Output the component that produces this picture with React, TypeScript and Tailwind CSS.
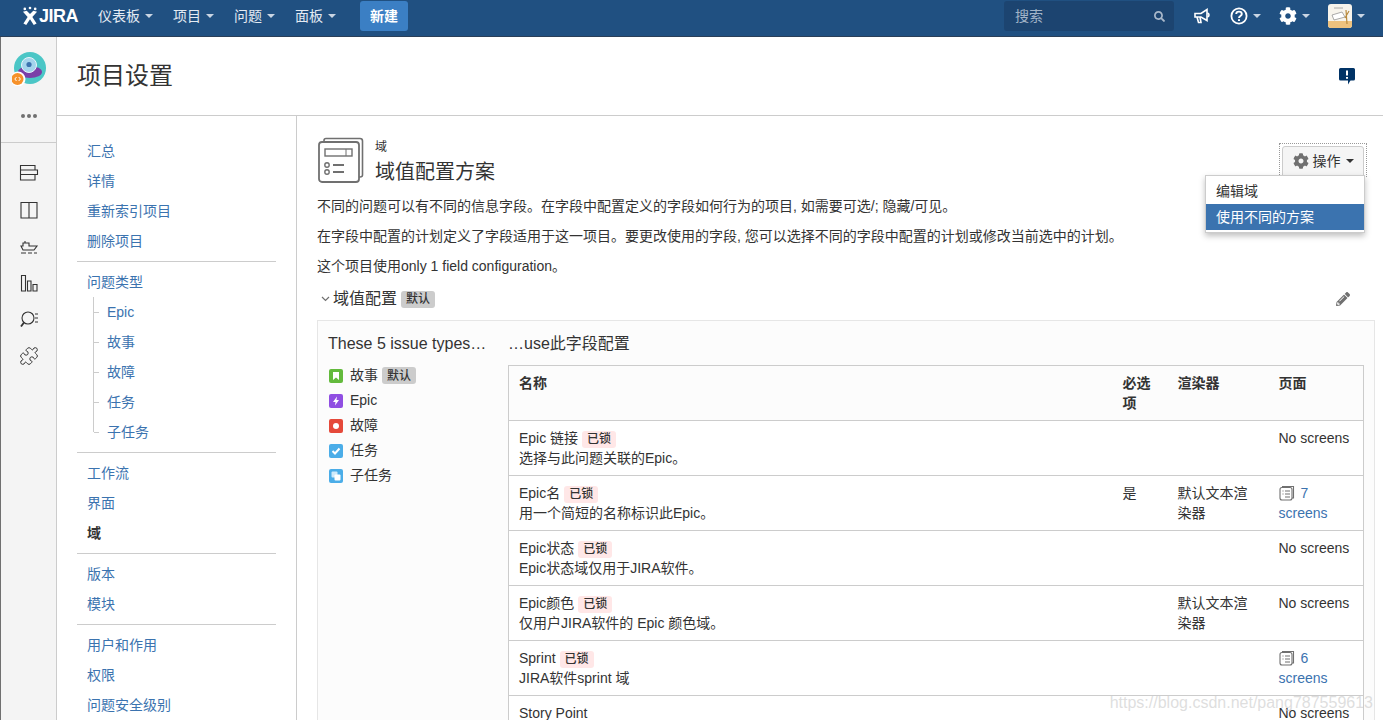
import { FaCog, FaSearch, FaPencilAlt } from 'react-icons/fa'
import { Puzzle } from 'lucide-react'

const linkTop = ['汇总', '详情', '重新索引项目', '删除项目']
const subTypes = ['Epic', '故事', '故障', '任务', '子任务']

const rows = [
  { name: 'Epic 链接', desc: '选择与此问题关联的Epic。', none: true },
  { name: 'Epic名', desc: '用一个简短的名称标识此Epic。', req: '是', render: '默认文本渲染器', screens: 7 },
  { name: 'Epic状态', desc: 'Epic状态域仅用于JIRA软件。', none: true },
  { name: 'Epic颜色', desc: '仅用户JIRA软件的 Epic 颜色域。', render: '默认文本渲染器', none: true },
  { name: 'Sprint', desc: 'JIRA软件sprint 域', screens: 6 },
]

function Caret({ color = 'border-t-[#c9d5e3]' }: { color?: string }) {
  return <span className={`inline-block w-0 h-0 border-x-[4px] border-x-transparent border-t-[4px] ${color}`} />
}

function NavItem({ label }: { label: string }) {
  return (
    <div className="flex items-center gap-[5px] px-[10px] text-[14px] text-[#e4ebf3]">
      <span>{label}</span>
      <Caret />
    </div>
  )
}

function Logo() {
  return (
    <div className="flex items-center h-full">
      <svg width="16" height="20" viewBox="0 0 17 20" fill="white">
        <circle cx="3" cy="2.5" r="1.4" />
        <circle cx="8.5" cy="1.5" r="1.4" />
        <circle cx="14" cy="2.5" r="1.4" />
        <path d="M1 5.5 L5 4.5 L8.5 8 L12 4.5 L16 5.500 L11 11 L15.500 18 L12.500 19.500 L8.500 13.500 L4.500 19.500 L1.500 18 L6 11 Z" />
      </svg>
      <span className="ml-[1px] text-[18px] font-bold text-white tracking-[-0.5px] font-['Liberation_Sans',sans-serif]">
        JIRA
      </span>
    </div>
  )
}

function Header() {
  return (
    <header className="h-[37px] shrink-0 bg-[#205081] border-b border-[#2a3f58] flex items-center pl-[22px] pr-[18px] pb-[4px]">
      <div className="w-[66px] h-full">
        <Logo />
      </div>
      <NavItem label="仪表板" />
      <NavItem label="项目" />
      <NavItem label="问题" />
      <NavItem label="面板" />
      <button className="ml-[14px] h-[30px] w-[48px] rounded-[3px] bg-[#3b7fc4] text-white text-[14px] font-bold">
        新建
      </button>
      <div className="ml-auto w-[170px] h-[30px] rounded-[3px] bg-[#1c4470] flex items-center justify-between pl-[11px] pr-[9px] text-[14px] text-[#a3b4c8]">
        <span>搜索</span>
        <FaSearch className="w-[11px] h-[11px] text-[#a9b8ca]" />
      </div>
      <svg className="ml-[20px]" width="17" height="16" viewBox="0 0 17 16" fill="none" stroke="white" strokeWidth="1.6">
        <path d="M1 5.500 H7 L13 1.500 V12.500 L7 9 H1 Z" />
        <path d="M3 9 L4.500 14.500 H7 L6 9" />
        <path d="M13.500 5 C15.500 5.500 15.500 8.500 13.500 9" />
      </svg>
      <svg className="ml-[19px]" width="18" height="18" viewBox="0 0 18 18" fill="none" stroke="white">
        <circle cx="9" cy="9" r="7.600" strokeWidth="1.800" />
        <path d="M6.200 7 C6.200 3.800 11.800 3.800 11.800 7 C11.800 9 9 9 9 11" strokeWidth="1.900" />
        <path d="M9 12.200 V14" strokeWidth="2" />
      </svg>
      <span className="ml-[5px] flex"><Caret /></span>
      <FaCog className="ml-[18px] w-[18px] h-[18px] text-white" />
      <span className="ml-[5px] flex"><Caret /></span>
      <svg className="ml-[18px] rounded-[3px]" width="24" height="24" viewBox="0 0 24 24">
        <rect width="24" height="24" fill="#f7f4ec" />
        <rect y="17" width="24" height="7" fill="#eec27e" />
        <path d="M4 11 L14 8 L17 13 L6 16 Z" fill="#fff" stroke="#888" strokeWidth="0.7" />
        <path d="M18 6 L19 20 M21 7 L17 14" stroke="#b98a3c" strokeWidth="1.2" />
        <path d="M6 4 H15" stroke="#999" strokeWidth="0.8" />
      </svg>
      <span className="ml-[5px] flex"><Caret /></span>
    </header>
  )
}

function RailIcon({ children }: { children: React.ReactNode }) {
  return (
    <svg width="20" height="20" viewBox="0 0 20 20" fill="none" stroke="#333" strokeWidth="1.1">
      {children}
    </svg>
  )
}

function Rail() {
  return (
    <aside className="w-[57px] shrink-0 bg-[#f4f4f4] border-l border-l-[#707070] border-r border-r-[#ccc] flex flex-col items-center">
      <svg className="mt-[15px]" width="34" height="34" viewBox="0 0 34 34">
        <circle cx="18" cy="16" r="16" fill="#4bc6c6" />
        <ellipse cx="18" cy="20" rx="12" ry="6" fill="#7b3fa8" />
        <circle cx="17" cy="13" r="7.500" fill="#a4d4ec" stroke="#e9f6fb" />
        <circle cx="17" cy="12.500" r="2.600" fill="#3b73af" />
        <circle cx="6" cy="27" r="7.500" fill="#fff" />
        <circle cx="5.500" cy="27" r="6" fill="#f6912a" />
        <path d="M4.500 25 L2.800 27 L4.500 29 M6.700 25 L8.400 27 L6.700 29" fill="none" stroke="#fff" strokeWidth="1" />
      </svg>
      <div className="mt-[28px] flex gap-[2px]">
        <span className="w-[4px] h-[4px] rounded-full bg-[#707070]" />
        <span className="w-[4px] h-[4px] rounded-full bg-[#707070]" />
        <span className="w-[4px] h-[4px] rounded-full bg-[#707070]" />
      </div>
      <div className="mt-[24px] w-full h-px bg-[#ccc]" />
      <div className="mt-[20px] flex flex-col items-center gap-[16.5px]">
        <RailIcon>
          <path d="M1.500 2.500 H16 V7 H1.500 Z M1.500 7 H18.500 V11.500 H1.500 Z M1.500 11.500 H16 V17 H1.500 Z" />
        </RailIcon>
        <RailIcon>
          <path d="M2 2.500 H18 V18 H2 Z M10 2.500 V18" />
        </RailIcon>
        <RailIcon>
          <path d="M2 10 H4 V7 H10 V10 H18 L15 14 H4 Z M6 7 V5 M2 17 H7 M9 17 H13 M15 17 H18" />
        </RailIcon>
        <RailIcon>
          <path d="M2.500 2.500 H6.500 V18 H2.500 Z M8.500 8 H12 V18 H8.500 Z M14 11.500 H18 V18 H14 Z" />
        </RailIcon>
        <RailIcon>
          <circle cx="9" cy="9" r="6" />
          <path d="M5 13.500 L2 17.500" strokeWidth="1.800" />
          <path d="M16 5 H19 M16 9 H19 M16 13 H19" />
        </RailIcon>
        <Puzzle className="w-[20px] h-[20px] text-[#333]" strokeWidth={1.2} />
      </div>
    </aside>
  )
}

function SideLink({ label, active }: { label: string; active?: boolean }) {
  return (
    <div className={`h-[30px] px-[10px] flex items-center text-[14px] ${active ? 'font-bold text-[#333]' : 'text-[#3b73af]'}`}>
      {label}
    </div>
  )
}

function Divider() {
  return <div className="h-px bg-[#ccc] mt-[5px] mb-[5px]" />
}

function Sidebar() {
  return (
    <nav className="w-[240px] shrink-0 border-r border-[#ccc] pl-[20px] pr-[20px] pt-[20px]">
      {linkTop.map((l) => <SideLink key={l} label={l} />)}
      <Divider />
      <SideLink label="问题类型" />
      <div className="relative">
        <div className="absolute left-[16px] top-0 bottom-[15px] w-px bg-[#ccc]" />
        {subTypes.map((s) => (
          <div key={s} className="relative h-[30px] pl-[30px] flex items-center text-[14px] text-[#3b73af]">
            <span className="absolute left-[17px] top-[15px] w-[5px] h-px bg-[#ccc]" />
            {s}
          </div>
        ))}
      </div>
      <Divider />
      <SideLink label="工作流" />
      <SideLink label="界面" />
      <SideLink label="域" active />
      <Divider />
      <SideLink label="版本" />
      <SideLink label="模块" />
      <Divider />
      <SideLink label="用户和作用" />
      <SideLink label="权限" />
      <SideLink label="问题安全级别" />
    </nav>
  )
}

function Lozenge({ children, locked }: { children: string; locked?: boolean }) {
  return (
    <span className={`inline-flex items-center justify-center h-[17px] w-[34px] rounded-[3px] text-[12px] font-medium text-[#333] ${locked ? 'bg-[#ffe7e7] mt-[2px]' : 'bg-[#cccccc]'}`}>
      {children}
    </span>
  )
}

function ScreenIcon() {
  return (
    <svg className="inline-block align-[-3px] mr-[6px]" width="16" height="16" viewBox="0 0 16 16" fill="none" stroke="#707070" strokeWidth="1.1">
      <path d="M3 1.500 H14.500 V13 H13" />
      <rect x="1" y="2.500" width="12" height="12.500" rx="2" />
      <path d="M3.500 6 H4.500 M3.500 9 H4.500 M6 6 H11 M6 9 H11 M6 12 H11" />
    </svg>
  )
}

function IssueIcon({ kind }: { kind: string }) {
  const bg: Record<string, string> = { story: '#63ba3c', epic: '#904ee2', bug: '#e5493a', task: '#4bade8', sub: '#4bade8' }
  return (
    <svg width="14" height="14" viewBox="0 0 14 14">
      <rect width="14" height="14" rx="2" fill={bg[kind]} />
      {kind === 'story' && <path d="M4 3 H10 V11 L7 8.600 L4 11 Z" fill="#fff" />}
      {kind === 'epic' && <path d="M8 2.500 L4 8 H6.500 L6 11.500 L10 6 H7.500 Z" fill="#fff" />}
      {kind === 'bug' && <circle cx="7" cy="7" r="3" fill="#fff" />}
      {kind === 'task' && <path d="M3.500 7 L6 9.500 L10.500 4.500" fill="none" stroke="#fff" strokeWidth="2" />}
      {kind === 'sub' && (
        <>
          <rect x="2.500" y="2.500" width="6" height="6" rx="1" fill="#cfeafa" />
          <rect x="5.500" y="5.500" width="6" height="6" rx="1" fill="#fff" />
        </>
      )}
    </svg>
  )
}

function IssueTypes() {
  const list = [
    { kind: 'story', label: '故事', def: true },
    { kind: 'epic', label: 'Epic' },
    { kind: 'bug', label: '故障' },
    { kind: 'task', label: '任务' },
    { kind: 'sub', label: '子任务' },
  ]
  return (
    <div className="mt-[9px]">
      {list.map((i) => (
        <div key={i.label} className="h-[25px] flex items-center text-[14px] text-[#333]">
          <span className="ml-[1px] mr-[7px] flex"><IssueIcon kind={i.kind} /></span>
          {i.label}
          {i.def && <span className="ml-[4px] flex"><Lozenge>默认</Lozenge></span>}
        </div>
      ))}
    </div>
  )
}

function FieldTable() {
  return (
    <table className="mt-[11px] w-[855px] table-fixed border-collapse border border-[#ccc] text-[14px] leading-[20px] text-[#333]">
      <colgroup>
        <col className="w-[604px]" />
        <col className="w-[55px]" />
        <col className="w-[101px]" />
        <col className="w-[95px]" />
      </colgroup>
      <thead>
        <tr className="h-[55px] border-b border-[#ccc] align-top text-left">
          <th className="px-[10px] pt-[7px] font-bold">名称</th>
          <th className="px-[10px] pt-[7px] font-bold">必选项</th>
          <th className="px-[10px] pt-[7px] font-bold">渲染器</th>
          <th className="px-[10px] pt-[7px] font-bold">页面</th>
        </tr>
      </thead>
      <tbody className="bg-white">
        {rows.map((r) => (
          <tr key={r.name} className="h-[55px] border-b border-[#ccc] align-top">
            <td className="px-[10px] pt-[7px]">
              <div className="flex items-center gap-[4px] h-[20px]">
                {r.name}
                <Lozenge locked>已锁</Lozenge>
              </div>
              <div>{r.desc}</div>
            </td>
            <td className="px-[10px] pt-[7px]">{r.req}</td>
            <td className="px-[10px] pt-[7px]">{r.render}</td>
            <td className="px-[10px] pt-[7px]">
              {r.none ? 'No screens' : (
                <span className="text-[#3b73af]"><ScreenIcon />{r.screens} screens</span>
              )}
            </td>
          </tr>
        ))}
        <tr className="h-[55px] align-top">
          <td className="px-[10px] pt-[7px]">Story Point</td>
          <td className="px-[10px] pt-[7px]" />
          <td className="px-[10px] pt-[7px]" />
          <td className="px-[10px] pt-[7px]">No screens</td>
        </tr>
      </tbody>
    </table>
  )
}

function Main() {
  return (
    <main className="relative flex-1 pl-[20px] pr-[9px] pt-[20px] text-[14px] text-[#333]">
      <div className="h-[60px] flex items-start">
        <svg className="ml-[1px] mt-[1px]" width="46" height="46" viewBox="0 0 46 46" fill="none" stroke="#707070">
          <path d="M6 5 V3.500 Q6 1.500 8 1.500 H42 Q44.500 1.500 44.500 4 V38 Q44.500 40 42 40 H41" strokeWidth="1.600" />
          <rect x="1" y="5" width="40" height="40" rx="3" strokeWidth="1.800" fill="#fff" />
          <rect x="7" y="12" width="27" height="7" strokeWidth="1.400" />
          <path d="M28 12 V19" strokeWidth="1" />
          <circle cx="9" cy="28" r="2.200" strokeWidth="1.400" />
          <circle cx="9" cy="35" r="2.200" strokeWidth="1.400" />
          <path d="M15 28 H26 M15 35 H26" strokeWidth="1.800" />
        </svg>
        <div className="ml-[11px]">
          <div className="mt-[3px] text-[12px] leading-[16px]">域</div>
          <h1 className="mt-[3px] text-[20px] leading-[28px] font-normal">域值配置方案</h1>
        </div>
      </div>
      <p className="leading-[20px]">不同的问题可以有不同的信息字段。在字段中配置定义的字段如何行为的项目, 如需要可选/; 隐藏/可见。</p>
      <p className="mt-[10px] leading-[20px]">在字段中配置的计划定义了字段适用于这一项目。要更改使用的字段, 您可以选择不同的字段中配置的计划或修改当前选中的计划。</p>
      <p className="mt-[10px] leading-[20px]">这个项目使用only 1 field configuration。</p>
      <div className="mt-[11px] h-[24px] flex items-center">
        <svg className="ml-[4px] mr-[3px]" width="9" height="6" viewBox="0 0 9 6" fill="none" stroke="#707070" strokeWidth="1.200">
          <path d="M1 1 L4.500 4.500 L8 1" />
        </svg>
        <span className="text-[16px]">域值配置</span>
        <span className="ml-[4px] flex"><Lozenge>默认</Lozenge></span>
        <FaPencilAlt className="ml-auto mr-[25px] w-[14px] h-[14px] text-[#707070]" />
      </div>
      <div className="mt-[9px] border border-[#e6e6e6] bg-[#fcfcfc] flex pl-[10px] pr-[10px] pt-[13px]">
        <div className="w-[180px] shrink-0">
          <div className="text-[16px] leading-[20px]">These 5 issue types…</div>
          <IssueTypes />
        </div>
        <div>
          <div className="text-[16px] leading-[20px]">…use此字段配置</div>
          <FieldTable />
        </div>
      </div>

      {/* Actions button with its open menu */}
      <div className="absolute right-[17px] top-[27px] border border-dotted border-[#999] px-[2px] pt-[2px]">
        <button className="w-[82px] h-[30px] bg-[#f5f5f5] border border-[#ccc] rounded-t-[3px] flex items-center justify-center gap-[4px] text-[14px] text-[#333]">
          <FaCog className="w-[16px] h-[16px] text-[#707070]" />
          操作
          <span className="ml-[1px] flex"><Caret color="border-t-[#333]" /></span>
        </button>
      </div>
      <div className="absolute left-[908px] top-[59px] w-[160px] bg-white border border-[#ccc] shadow-[0_3px_6px_rgba(0,0,0,0.25)] pt-[2px] pb-[2px] text-[14px]">
        <div className="h-[26px] px-[10px] flex items-center">编辑域</div>
        <div className="h-[26px] px-[10px] flex items-center bg-[#3b73af] text-white">使用不同的方案</div>
      </div>
    </main>
  )
}

export default function App() {
  return (
    <div className="relative w-[1383px] h-[720px] overflow-hidden bg-white flex flex-col font-['Liberation_Sans','Noto_Sans_CJK_SC',sans-serif]">
      <Header />
      <div className="flex flex-1 min-h-0">
        <Rail />
        <div className="flex-1 flex flex-col min-w-0">
          <div className="h-[79px] shrink-0 border-b border-[#ccc] flex items-center justify-between pl-[20px] pr-[28px]">
            <h1 className="text-[24px] font-normal text-[#333]">项目设置</h1>
            <svg width="16" height="17" viewBox="0 0 16 17">
              <path d="M1.500 0 H14.500 Q16 0 16 1.500 V11 Q16 12.500 14.500 12.500 H11.500 L9 16.500 V12.500 H1.500 Q0 12.500 0 11 V1.500 Q0 0 1.500 0 Z" fill="#003366" />
              <path d="M8 2.500 V7.500 M8 9 V10.800" stroke="#fff" strokeWidth="2" />
            </svg>
          </div>
          <div className="flex flex-1 min-h-0">
            <Sidebar />
            <Main />
          </div>
        </div>
      </div>
      {/* CSDN watermark burned into the screenshot */}
      <div className="absolute right-[10px] bottom-[7px] text-[16px] leading-[20px] text-[#c8c8c8]/60 whitespace-nowrap">
        https://blog.csdn.net/pang787559613
      </div>
    </div>
  )
}
